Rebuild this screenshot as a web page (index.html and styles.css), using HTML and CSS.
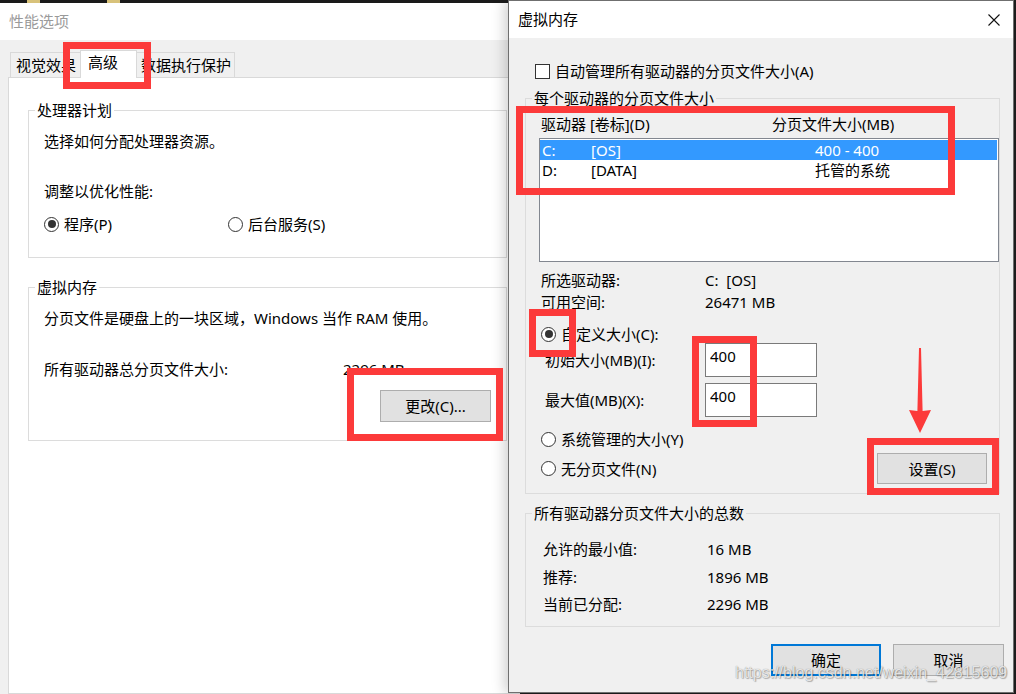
FILE: index.html
```html
<!DOCTYPE html>
<html lang="zh-CN">
<head>
<meta charset="utf-8">
<title>虚拟内存</title>
<link rel="stylesheet" href="styles.css">
</head>
<body>
<div class="desktop">
  <div class="taskstrip"><span class="ts-a"></span><span class="ts-b"></span></div>

  <section class="win win-perf">
    <header class="titlebar inactive">性能选项</header>
    <div class="tabs">
      <div class="tab tab-1">视觉效果</div>
      <div class="tab tab-2 active">高级</div>
      <div class="tab tab-3">数据执行保护</div>
    </div>
    <div class="tab-panel">
      <fieldset class="group g-cpu">
        <legend>处理器计划</legend>
        <div class="gcontent">
          <p class="line cpu-1">选择如何分配处理器资源。</p>
          <p class="line cpu-2">调整以优化性能:</p>
          <div class="radio-row">
            <label class="opt opt-first"><span class="radio checked"></span>程序(P)</label>
            <label class="opt"><span class="radio"></span>后台服务(S)</label>
          </div>
        </div>
      </fieldset>
      <fieldset class="group g-vm">
        <legend>虚拟内存</legend>
        <div class="gcontent">
          <p class="line vm-1">分页文件是硬盘上的一块区域，Windows 当作 RAM 使用。</p>
          <div class="kv-total"><span>所有驱动器总分页文件大小:</span><span>2296 MB</span></div>
          <div class="btn-row"><button class="btn btn-change">更改(C)...</button></div>
        </div>
      </fieldset>
    </div>
  </section>

  <section class="win win-vm">
    <header class="titlebar">
      <span>虚拟内存</span>
      <svg class="close" width="12" height="12" viewBox="0 0 12 12"><path d="M0.5 0.5 L11.5 11.5 M11.5 0.5 L0.5 11.5" stroke="#111" stroke-width="1.1" fill="none"/></svg>
    </header>
    <div class="vm-body">
      <label class="check-row"><span class="checkbox"></span>自动管理所有驱动器的分页文件大小(A)</label>

      <fieldset class="group g-drives">
        <legend>每个驱动器的分页文件大小</legend>
        <div class="gcontent">
          <div class="col-head"><span>驱动器 [卷标](D)</span><span>分页文件大小(MB)</span></div>
          <div class="listbox">
            <div class="lrow selected"><span>C:</span><span>[OS]</span><span>400 - 400</span></div>
            <div class="lrow"><span>D:</span><span>[DATA]</span><span>托管的系统</span></div>
          </div>
          <div class="kv kv-first"><span>所选驱动器:</span><span>C:&nbsp; [OS]</span></div>
          <div class="kv kv-second"><span>可用空间:</span><span>26471 MB</span></div>
          <label class="opt opt-custom"><span class="radio checked"></span>自定义大小(C):</label>
          <div class="field-row fr-1"><span class="field-label">初始大小(MB)(I):</span><input class="textbox" type="text" value="400"></div>
          <div class="field-row fr-2"><span class="field-label">最大值(MB)(X):</span><input class="textbox" type="text" value="400"></div>
          <label class="opt opt-sys"><span class="radio"></span>系统管理的大小(Y)</label>
          <div class="last-row">
            <label class="opt"><span class="radio"></span>无分页文件(N)</label>
            <button class="btn btn-set">设置(S)</button>
          </div>
        </div>
      </fieldset>

      <fieldset class="group g-total">
        <legend>所有驱动器分页文件大小的总数</legend>
        <div class="gcontent">
          <div class="kv t-1"><span>允许的最小值:</span><span>16 MB</span></div>
          <div class="kv t-2"><span>推荐:</span><span>1896 MB</span></div>
          <div class="kv t-3"><span>当前已分配:</span><span>2296 MB</span></div>
        </div>
      </fieldset>

      <div class="dialog-buttons">
        <button class="btn btn-ok">确定</button>
        <button class="btn btn-cancel">取消</button>
      </div>
    </div>
  </section>

  <div class="mark mark-tab"></div>
  <div class="mark mark-change"></div>
  <div class="mark mark-list"></div>
  <div class="mark mark-radio"></div>
  <div class="mark mark-inputs"></div>
  <div class="mark mark-set"></div>
  <svg class="arrow" width="30" height="90" viewBox="905 345 30 90">
    <polygon points="919,348 921,348 922.6,411 931,410 920,433 909,410 917.4,411" fill="#fc3a3a"/>
  </svg>

  <div class="watermark">https://blog.csdn.net/weixin_42815609</div>
</div>
</body>
</html>
```

FILE: styles.css
```css
* { box-sizing: border-box; }

html, body {
  margin: 0;
  padding: 0;
}

body {
  font-family: "Noto Sans", "Noto Sans CJK SC", sans-serif;
  font-size: 15px;
  line-height: 20px;
  color: #000;
}

p { margin: 0; }

.desktop {
  position: relative;
  width: 1016px;
  height: 694px;
  overflow: hidden;
  background: #1d1d1d;
}

.taskstrip {
  position: absolute;
  left: 0;
  top: 0;
  width: 508px;
  height: 3px;
  background: #1a1a1a;
}
.ts-a, .ts-b {
  position: absolute;
  top: 0;
  width: 13px;
  height: 3px;
  background: #d8c27a;
}
.ts-a { left: 27px; }
.ts-b { left: 107px; }

/* ---------- windows ---------- */
.win {
  position: absolute;
  background: #f0f0f0;
  display: flex;
  flex-direction: column;
}

.titlebar {
  height: 37px;
  flex: none;
  background: #fff;
  padding-left: 9px;
  line-height: 37px;
  display: flex;
  align-items: center;
  justify-content: space-between;
}
.titlebar.inactive { color: #9a9a9a; }

.win-perf {
  left: 0;
  top: 3px;
  width: 520px;
  height: 691px;
  z-index: 1;
}

.win-vm {
  left: 508px;
  top: 0;
  width: 506px;
  height: 693px;
  border: 1px solid #6f6f6f;
  z-index: 2;
  box-shadow: -4px 0 12px rgba(0, 0, 0, 0.18);
}
.close { margin-right: 13px; flex: none; }

/* ---------- tabs ---------- */
.tabs {
  height: 37px;
  flex: none;
  display: flex;
  align-items: flex-end;
  padding-left: 10px;
}
.tab {
  height: 25px;
  line-height: 24px;
  border: 1px solid #d9d9d9;
  border-bottom: 0;
  background: #f0f0f0;
  white-space: nowrap;
}
.tab-1 { width: 70px; padding-left: 5px; border-right: 0; }
.tab-2 { width: 57px; padding-left: 7px; }
.tab-3 { width: 98px; padding-left: 4px; border-left: 0; }
.tab.active {
  height: 28px;
  margin-bottom: -1px;
  position: relative;
  z-index: 1;
  background: #fff;
  line-height: 23px;
  padding-bottom: 4px;
}

.tab-panel {
  flex: 1;
  margin-left: 8px;
  background: #fff;
  border: 1px solid #d9d9d9;
  padding: 22px 0 0 19px;
}

/* ---------- group boxes ---------- */
fieldset.group {
  margin: 0;
  border: 1px solid #dcdcdc;
  padding: 0 0 0 6px;
  min-width: 0;
}
fieldset.group legend {
  padding: 0 2px;
  line-height: 20px;
}

fieldset.g-cpu { width: 479px; padding-bottom: 23px; }
.g-cpu .gcontent { padding-left: 9px; }
.cpu-1 { margin-top: 11px; }
.cpu-2 { margin-top: 30px; }
.radio-row {
  margin-top: 13px;
  display: flex;
  height: 20px;
}

fieldset.g-vm { width: 479px; margin-top: 19px; padding-bottom: 18px; }
.g-vm .gcontent { padding-left: 9px; }
.vm-1 { margin-top: 11px; }
.kv-total {
  margin-top: 31px;
  display: grid;
  grid-template-columns: 299px auto;
}
.btn-row {
  margin-top: 11px;
  display: flex;
  justify-content: flex-end;
  padding-right: 15px;
}

/* ---------- controls ---------- */
.opt {
  display: flex;
  align-items: center;
  white-space: nowrap;
}
.opt-first { width: 184px; }

.radio {
  width: 15px;
  height: 15px;
  border: 1px solid #333;
  border-radius: 50%;
  background: #fff;
  display: inline-flex;
  align-items: center;
  justify-content: center;
  margin-right: 5px;
  flex: none;
}
.radio.checked::after {
  content: "";
  width: 8px;
  height: 8px;
  border-radius: 50%;
  background: #333;
}

.checkbox {
  width: 15px;
  height: 15px;
  border: 1px solid #333;
  background: #fff;
  margin-right: 5px;
  flex: none;
}

.btn {
  font: inherit;
  color: #000;
  background: #e1e1e1;
  border: 1px solid #adadad;
  padding: 0;
  margin: 0;
  text-align: center;
}
.btn-change { width: 111px; height: 32px; }

/* ---------- virtual memory dialog ---------- */
.vm-body {
  flex: 1;
  padding: 23px 13px 0 16px;
}

.check-row {
  display: flex;
  align-items: center;
  height: 20px;
  padding-left: 10px;
}

fieldset.g-drives { margin-top: 7px; padding-bottom: 9px; }
.g-drives .gcontent { padding-left: 7px; }

.col-head {
  margin-top: 6px;
  padding-left: 2px;
  display: grid;
  grid-template-columns: 231px auto;
}

.listbox {
  margin-top: 4px;
  width: 460px;
  height: 124px;
  border: 1px solid #828790;
  background: #fff;
  padding: 1px 0;
}
.lrow {
  height: 20px;
  padding-left: 2px;
  display: grid;
  grid-template-columns: 49px 224px auto;
  white-space: nowrap;
}
.lrow.selected {
  background: #3399ff;
  color: #fff;
  margin-right: 1px;
}

.kv {
  display: grid;
  grid-template-columns: 164px auto;
  padding-left: 2px;
}
.kv-first { margin-top: 8px; }
.kv-second { margin-top: 2px; }

.opt-custom {
  margin-top: 13px;
  height: 18px;
  padding-left: 2px;
}

.field-row {
  display: flex;
  align-items: center;
  height: 34px;
}
.fr-2 { margin-top: 6px; }
.field-label {
  width: 166px;
  padding-left: 6px;
  flex: none;
}
.textbox {
  width: 112px;
  height: 34px;
  border: 1px solid #7a7a7a;
  background: #fff;
  font: inherit;
  color: #000;
  padding: 3px 4px 11px 4px;
  margin: 0;
  outline: none;
}

.opt-sys {
  margin-top: 12px;
  height: 20px;
  padding-left: 2px;
}

.last-row {
  margin-top: 4px;
  display: flex;
  align-items: center;
  justify-content: space-between;
  padding-left: 2px;
}
.btn-set {
  width: 110px;
  height: 31px;
  margin-right: 12px;
}

fieldset.g-total { margin-top: 9px; padding-bottom: 12px; }
.g-total .gcontent { padding-left: 11px; }
.g-total .kv { padding-left: 0; }
.t-1 { margin-top: 16px; }
.t-2 { margin-top: 8px; }
.t-3 { margin-top: 7px; }

.dialog-buttons {
  margin-top: 17px;
  margin-right: -4px;
  display: flex;
  justify-content: flex-end;
  gap: 12px;
}
.btn-ok {
  width: 110px;
  height: 32px;
  border: 2px solid #0078d7;
}
.btn-cancel {
  width: 111px;
  height: 32px;
}

/* ---------- annotations ---------- */
.mark {
  position: absolute;
  border: 7px solid #fc3a3a;
  z-index: 10;
}
.mark-tab    { left: 63px;  top: 42px;  width: 88px;  height: 47px; }
.mark-change { left: 347px; top: 368px; width: 156px; height: 73px; }
.mark-list   { left: 516px; top: 106px; width: 439px; height: 89px; }
.mark-radio  { left: 529px; top: 309px; width: 47px;  height: 48px; }
.mark-inputs { left: 692px; top: 336px; width: 65px;  height: 91px; }
.mark-set    { left: 867px; top: 438px; width: 132px; height: 57px; }

.arrow {
  position: absolute;
  left: 905px;
  top: 345px;
  z-index: 10;
}

.watermark {
  position: absolute;
  left: 735px;
  top: 663px;
  z-index: 11;
  font-family: "Liberation Sans", Arial, sans-serif;
  font-size: 16px;
  line-height: 20px;
  color: rgba(255, 255, 255, 0.8);
  text-shadow: 0 0 1px rgba(0, 0, 0, 0.45), 1px 1px 1px rgba(0, 0, 0, 0.25);
  white-space: nowrap;
}
```
